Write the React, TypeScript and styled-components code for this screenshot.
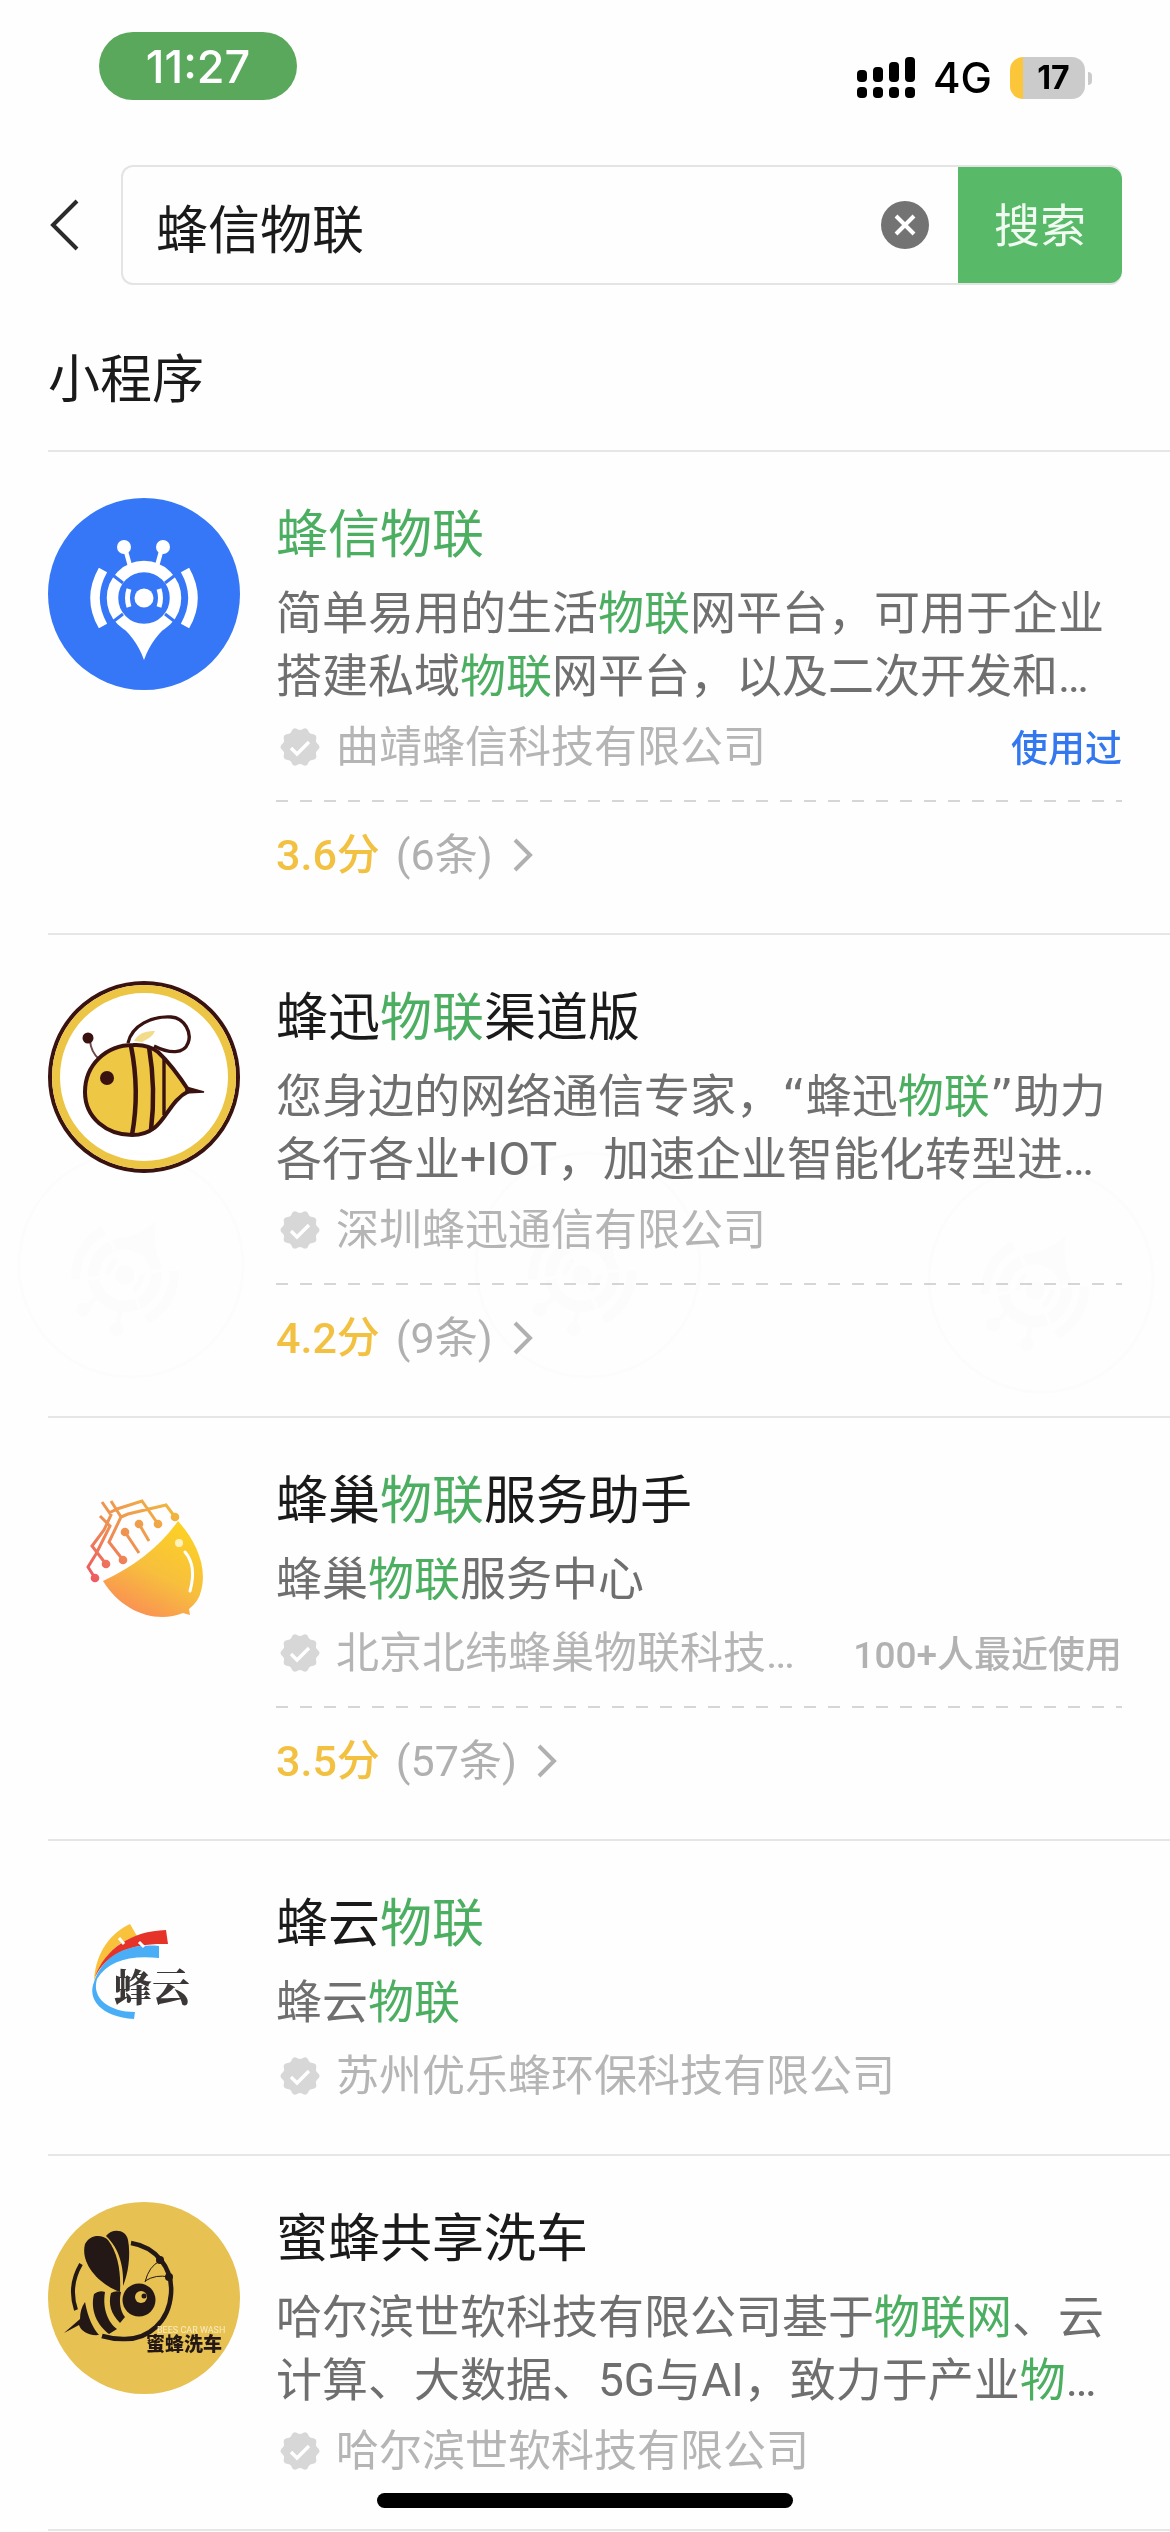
import React from "react";
import styled, { createGlobalStyle } from "styled-components";

const Global = createGlobalStyle`
  * { box-sizing: border-box; }
  body {
    margin: 0;
    background: #fefefe;
    color: #1a1a1a;
    font-family: Roboto, "Noto Sans CJK SC", sans-serif;
  }
  button, input { font: inherit; color: inherit; border: 0; margin: 0; padding: 0; background: none; }
`;

const Page = styled.div`
  position: relative;
  min-height: 100vh;
  overflow: hidden;
`;

const StatusBar = styled.header`
  display: flex;
  justify-content: space-between;
  align-items: flex-start;
  padding: 32px 78px 0 99px;
  font-family: Inter, "Noto Sans CJK SC", sans-serif;
`;

const Clock = styled.div`
  width: 198px;
  height: 68px;
  border-radius: 34px;
  background: #5aa85b;
  color: #fff;
  font-size: 45px;
  font-weight: 500;
  line-height: 70px;
  text-align: center;
`;

const StatusIcons = styled.div`
  display: flex;
  align-items: center;
  gap: 18px;
  height: 42px;
  margin-top: 25px;
`;

const Network = styled.span`
  font-size: 42px;
  line-height: 42px;
  font-weight: 500;
  color: #000;
`;

const Battery = styled.div`
  display: flex;
  align-items: center;
  gap: 3px;
`;

const BatteryBody = styled.div`
  width: 75px;
  height: 42px;
  border-radius: 13px;
  background: linear-gradient(to right, #fcc63a 13px, #cbcbcb 13px);
  padding-left: 12px;
  color: #000;
  font-size: 32px;
  font-weight: 700;
  line-height: 42px;
  text-align: center;
`;

const BatteryTip = styled.div`
  width: 4px;
  height: 13px;
  border-radius: 0 4px 4px 0;
  background: #cbcbcb;
`;

const SearchRow = styled.form`
  display: flex;
  align-items: center;
  gap: 40px;
  padding: 65px 48px 0 48px;
`;

const IconButton = styled.button`
  display: flex;
  flex: none;
  cursor: pointer;
`;

const SearchBox = styled.div`
  flex: 1;
  min-width: 0;
  display: flex;
  align-items: center;
  height: 120px;
  border: 2px solid #e4e4e4;
  border-right: 0;
  border-radius: 12px;
`;

const SearchInput = styled.input`
  flex: 1;
  min-width: 0;
  height: 100%;
  padding-left: 33px;
  padding-top: 2px;
  font-size: 52px;
  outline: none;
`;

const SearchButton = styled.button`
  align-self: stretch;
  width: 164px;
  margin-left: 29px;
  padding-top: 2px;
  border-radius: 0 12px 12px 0;
  background: #58b969;
  color: #f1fbf2;
  font-size: 46px;
  line-height: 60px;
`;

const SectionTitle = styled.h1`
  margin: 0 0 0 48px;
  padding: 59px 0 32px;
  border-bottom: 2px solid #e6e6e6;
  font-size: 52px;
  font-weight: 400;
  line-height: 74px;
`;

const Results = styled.ul`
  list-style: none;
  margin: 0 0 0 48px;
  padding: 0;
`;

const Item = styled.li`
  display: flex;
  gap: 36px;
  padding: 46px 48px 48px 0;
  border-bottom: 2px solid #e6e6e6;
`;

const Avatar = styled.svg`
  flex: none;
  width: 192px;
  height: 192px;
`;

const Body = styled.div`
  flex: 1;
  min-width: 0;
`;

const Name = styled.h2`
  margin: 0 0 8px;
  font-size: 52px;
  font-weight: 400;
  line-height: 76px;
`;

const Desc = styled.p`
  margin: 0 0 9px;
  min-height: 66px;
  color: #6f6f6f;
  font-size: 46px;
  line-height: 63px;
`;

const Hit = styled.em`
  font-style: normal;
  color: #4cae60;
`;

const Quote = styled.span`
  font-family: "DejaVu Sans", sans-serif;
`;

const Meta = styled.div`
  display: flex;
  align-items: center;
  height: 60px;
`;

const Badge = styled.svg`
  flex: none;
  width: 40px;
  height: 40px;
  margin: 0 16px 0 4px;
`;

const Company = styled.span`
  flex: 1;
  color: #b5b5b5;
  font-size: 43px;
  line-height: 60px;
  white-space: nowrap;
`;

const Usage = styled.span<{ $used?: boolean }>`
  padding-top: 6px;
  color: ${(p) => (p.$used ? "#3478f0" : "#b2b2b2")};
  font-size: 37px;
  font-weight: 500;
  line-height: 60px;
  white-space: nowrap;
`;

const Rating = styled.a`
  display: flex;
  align-items: center;
  margin-top: 23px;
  padding-top: 25px;
  background: repeating-linear-gradient(to right, #d6d6d6 0 12px, transparent 12px 24px) top / 100% 2px no-repeat;
  color: #b0b0b0;
  font-size: 43px;
  line-height: 60px;
  text-decoration: none;
`;

const Score = styled.b`
  margin-right: 16px;
  color: #f3c142;
  font-weight: 500;
`;

const Arrow = styled.svg`
  width: 20px;
  height: 34px;
  margin-left: 20px;
`;

const HomeBar = styled.div`
  position: fixed;
  left: 50%;
  bottom: 24px;
  width: 416px;
  height: 15px;
  margin-left: -208px;
  border-radius: 8px;
  background: #000;
`;

const Watermark = styled.svg<{ $left: number; $top: number }>`
  position: absolute;
  left: ${(p) => p.$left}px;
  top: ${(p) => p.$top}px;
  width: 228px;
  height: 228px;
  pointer-events: none;
  mix-blend-mode: multiply;
`;

const Signal = () => (
  <svg width="58" height="42" viewBox="0 0 58 42" aria-hidden="true">
    {[13, 10, 5, 0].map((y, i) => (
      <g key={y}>
        <rect x={i * 16} y={y} width="10" height={25 - y} rx="4" />
        <rect x={i * 16} y="30" width="10" height="11" rx="4" />
      </g>
    ))}
  </svg>
);

const badgePath = (() => {
  let d = "";
  for (let i = 0; i <= 90; i++) {
    const a = (i / 90) * Math.PI * 2;
    const r = 18.2 + 1.3 * Math.cos(a * 10 + Math.PI);
    d += `${i ? "L" : "M"}${(20 + r * Math.sin(a)).toFixed(2)} ${(20 - r * Math.cos(a)).toFixed(2)}`;
  }
  return d + "Z";
})();

const Verified = () => (
  <Badge viewBox="0 0 40 40" aria-hidden="true">
    <path d={badgePath} fill="#d7d7d7" />
    <path d="M11 21l6 6 12-12" fill="none" stroke="#fff" strokeWidth="3.4" />
  </Badge>
);

const FastBeeShape = ({ color, gap }: { color: string; gap: string }) => (
  <g fill="none" stroke={color}>
    <circle cx="76" cy="49" r="7" fill={color} stroke="none" />
    <circle cx="115" cy="49" r="7" fill={color} stroke="none" />
    <path d="M77 50L82 68M114 50L109 68" strokeWidth="4.5" />
    <circle cx="96" cy="100" r="31.5" strokeWidth="11.5" />
    <path d="M67 123Q96 137 125 123Q104 139 96 162Q88 139 67 123Z" fill={color} stroke="none" />
    <path d="M75 85L62 75M117 85L130 75M75 116L62 126M117 116L130 126" stroke={gap} strokeWidth="3" />
    <circle cx="96" cy="100" r="9.5" fill={color} stroke="none" />
    <path d="M81 91Q78 100 81 109M111 91Q114 100 111 109" strokeWidth="5" />
    <path d="M55 72Q39 100 55 128M137 72Q153 100 137 128" strokeWidth="9.5" />
  </g>
);

const FastBeeLogo = () => (
  <Avatar viewBox="0 0 192 192" aria-hidden="true">
    <circle cx="96" cy="96" r="96" fill="#3677f7" />
    <FastBeeShape color="#fff" gap="#3677f7" />
  </Avatar>
);

const RoundBeeLogo = () => (
  <Avatar viewBox="0 0 192 192" aria-hidden="true">
    <circle cx="96" cy="96" r="94" fill="#fff" stroke="#3a1210" strokeWidth="4" />
    <circle cx="96" cy="96" r="88" fill="none" stroke="#edc544" strokeWidth="8" />
    <path d="M80 62C84 44 104 35 123 36C137 37 144 52 140 62C136 73 122 73 106 65" fill="#fff" stroke="#3a1210" strokeWidth="3.4" />
    <path d="M86 60Q92 49 107 50Q105 56 94 61Z" fill="#f2dc8c" />
    <path d="M51 78Q43 71 42 60" fill="none" stroke="#6b4a48" strokeWidth="2" />
    <circle cx="40" cy="57" r="5.5" fill="#3a1210" />
    <path d="M85 64C58 64 37 84 37 111C37 137 59 154 84 154C118 154 116 122 141 110Q124 84 110 71Q100 63 85 64Z" fill="#eec745" stroke="#3a1210" strokeWidth="4" />
    <path d="M138 106L156 111L138 112Z" fill="#3a1210" stroke="#3a1210" strokeWidth="1.5" />
    <path d="M83 65Q92 110 84 154M101 66Q108 108 103 149" fill="none" stroke="#3a1210" strokeWidth="4.5" />
    <path d="M116 78V134" stroke="#3a1210" strokeWidth="3.4" />
    <circle cx="59" cy="97" r="7" fill="#3a1210" />
  </Avatar>
);

const HiveLogo = () => (
  <Avatar viewBox="0 0 192 192" aria-hidden="true">
    <defs>
      <linearGradient id="hiveFill" x1="0.85" y1="0" x2="0.3" y2="1">
        <stop offset="0" stopColor="#fdd322" />
        <stop offset="0.55" stopColor="#f7bf3d" />
        <stop offset="1" stopColor="#fa8d55" />
      </linearGradient>
      <linearGradient id="hiveWire" gradientUnits="userSpaceOnUse" x1="120" y1="42" x2="42" y2="112">
        <stop offset="0" stopColor="#f0b53f" />
        <stop offset="0.6" stopColor="#ef8a55" />
        <stop offset="1" stopColor="#ee5a62" />
      </linearGradient>
    </defs>
    <path d="M130 57C147 76 160 102 153 127Q151 137 141 145L142 151L135 149C108 160 74 148 55 117Q104 94 130 57Z" fill="url(#hiveFill)" />
    <path d="M137 88Q149 102 142 127" fill="none" stroke="#fff" strokeWidth="3" strokeLinecap="round" />
    <circle cx="131" cy="79" r="4" fill="#fff3bd" />
    <g fill="none" stroke="url(#hiveWire)" strokeWidth="3">
      <path d="M54 38L63 51L56 66L44 82L58 100M63 37L73 53L61 78L75 96M61 49L69 45L94 37L110 60M73 53L80 50L118 41L127 53M52 52L62 62L48 90L40 103L47 114M91 60L101 77M77 68L91 89" />
    </g>
    <g fill="url(#hiveWire)">
      {[[47, 114], [58, 100], [75, 96], [77, 68], [91, 60], [110, 60], [127, 53]].map(([x, y]) => (
        <circle key={x} cx={x} cy={y} r="4.3" />
      ))}
    </g>
  </Avatar>
);

const LogoText = styled.text`
  font-family: "Noto Serif CJK SC", "Noto Sans CJK SC", serif;
  font-weight: 900;
`;

const CloudLogo = () => (
  <Avatar viewBox="0 0 192 192" aria-hidden="true">
    <path d="M46 94C48 64 63 46 82 37L89 49C68 55 54 71 46 94Z" fill="#f8c23c" />
    <path d="M47 90C57 62 83 44 118 43L120 57C84 56 59 66 47 90Z" fill="#e63329" />
    <path d="M46 95C55 69 78 56 111 59L111 71C81 68 60 74 49 92C43 112 62 125 87 125L86 132C53 130 39 112 46 95Z" fill="#4aaef6" />
    <path d="M71 51L76 57M91 55L96 60" stroke="#fff" strokeWidth="3" />
    <LogoText x="66" y="114" fontSize="38" fill="#3b3736">蜂云</LogoText>
  </Avatar>
);

const CarWashLogo = () => (
  <Avatar viewBox="0 0 192 192" aria-hidden="true">
    <circle cx="96" cy="96" r="96" fill="#e7c151" />
    <g fill="none" stroke="#231815">
      <path d="M83 41C108 45 125 66 123 92C121 119 101 138 75 137Q64 137 54 134" strokeWidth="4.5" />
      <path d="M33 62Q20 84 28 108" strokeWidth="4" />
      <path d="M97 80Q101 64 112 59M97 79Q108 72 121 75" strokeWidth="1" />
    </g>
    <g fill="#231815">
      <circle cx="112" cy="58" r="4" />
      <circle cx="121" cy="75" r="4" />
      <path d="M72 90C50 82 32 61 37 42C42 32 54 32 60 38C70 51 73 70 72 90Z" />
      <path d="M75 84C76 66 72 47 58 34C64 26 78 27 80 38C83 54 80 72 75 84Z" />
      <circle cx="91" cy="98" r="16.5" />
      <path d="M63 91Q68 88 73 90C70 102 74 112 77 115L72 121C63 112 60 102 63 91Z" />
      <path d="M46 92Q51 88 57 90C54 108 61 121 69 127L61 132C49 123 42 108 46 92Z" />
      <path d="M37 100C40 116 45 126 51 133C40 134 33 129 31 123L16 131L32 117Q32 107 37 100Z" />
    </g>
    <circle cx="93" cy="95" r="6" fill="#e7c151" />
    <circle cx="96" cy="94" r="2.5" fill="#231815" />
    <text x="109" y="131" fontSize="9" fill="#f8ecc0">BEES CAR WASH</text>
    <text x="98" y="149" fontSize="19" fontWeight="900" fill="#231815">蜜蜂洗车</text>
  </Avatar>
);

type Entry = {
  Logo: React.FC;
  name: string;
  desc: string;
  company: string;
  usage?: string;
  used?: boolean;
  score?: string;
  count?: number;
};

const entries: Entry[] = [
  { Logo: FastBeeLogo, name: "[蜂信物联]", desc: "简单易用的生活[物联]网平台，可用于企业搭建私域[物联]网平台，以及二次开发和…", company: "曲靖蜂信科技有限公司", usage: "使用过", used: true, score: "3.6", count: 6 },
  { Logo: RoundBeeLogo, name: "蜂迅[物联]渠道版", desc: "您身边的网络通信专家，“蜂迅[物联]”助力各行各业+IOT，加速企业智能化转型进…", company: "深圳蜂迅通信有限公司", score: "4.2", count: 9 },
  { Logo: HiveLogo, name: "蜂巢[物联]服务助手", desc: "蜂巢[物联]服务中心", company: "北京北纬蜂巢物联科技…", usage: "100+人最近使用", score: "3.5", count: 57 },
  { Logo: CloudLogo, name: "蜂云[物联]", desc: "蜂云[物联]", company: "苏州优乐蜂环保科技有限公司" },
  { Logo: CarWashLogo, name: "蜜蜂共享洗车", desc: "哈尔滨世软科技有限公司基于[物联网]、云计算、大数据、5G与AI，致力于产业[物]…", company: "哈尔滨世软科技有限公司" },
];

const watermarks = [
  { left: 17, top: 1151 },
  { left: 474, top: 1151 },
  { left: 927, top: 1166 },
];

// Parts in square brackets are the matched keywords; curly quotes get a wider face.
const highlight = (text: string) =>
  text.split(/(\[[^\]]*\]|[“”])/).map((part, i) => {
    if (part.startsWith("[")) return <Hit key={i}>{part.slice(1, -1)}</Hit>;
    if (part === "“" || part === "”") return <Quote key={i}>{part}</Quote>;
    return part;
  });

export default function App() {
  return (
    <Page>
      <Global />
      <StatusBar>
        <Clock>11:27</Clock>
        <StatusIcons>
          <Signal />
          <Network>4G</Network>
          <Battery>
            <BatteryBody>17</BatteryBody>
            <BatteryTip />
          </Battery>
        </StatusIcons>
      </StatusBar>
      <SearchRow onSubmit={(e) => e.preventDefault()}>
        <IconButton type="button" aria-label="返回">
          <svg width="33" height="54" viewBox="0 0 33 54" fill="none" stroke="#2b2b2b" strokeWidth="4">
            <path d="M29 3L5 27L29 51" />
          </svg>
        </IconButton>
        <SearchBox>
          <SearchInput aria-label="搜索小程序" defaultValue="蜂信物联" />
          <IconButton type="button" aria-label="清除">
            <svg width="48" height="48" viewBox="0 0 48 48">
              <circle cx="24" cy="24" r="24" fill="#737373" />
              <path d="M15 15L33 33M33 15L15 33" stroke="#fff" strokeWidth="4" />
            </svg>
          </IconButton>
          <SearchButton type="submit">搜索</SearchButton>
        </SearchBox>
      </SearchRow>
      <SectionTitle>小程序</SectionTitle>
      <Results>
        {entries.map(({ Logo, ...e }) => (
          <Item key={e.name}>
            <Logo />
            <Body>
              <Name>{highlight(e.name)}</Name>
              <Desc>{highlight(e.desc)}</Desc>
              <Meta>
                <Verified />
                <Company>{e.company}</Company>
                {e.usage && <Usage $used={e.used}>{e.usage}</Usage>}
              </Meta>
              {e.score && (
                <Rating href="#">
                  <Score>{e.score}分</Score>({e.count}条)
                  <Arrow viewBox="0 0 20 34" fill="none" stroke="#b0b0b0" strokeWidth="4" aria-hidden="true">
                    <path d="M2 2L17 17L2 32" />
                  </Arrow>
                </Rating>
              )}
            </Body>
          </Item>
        ))}
      </Results>
      {watermarks.map(({ left, top }) => (
        <Watermark key={left} $left={left} $top={top} viewBox="0 0 228 228" aria-hidden="true">
          <circle cx="114" cy="114" r="112" fill="none" stroke="#fdfdfd" strokeWidth="3" />
          <g transform="translate(108 124) rotate(210) translate(-96 -100)">
            <FastBeeShape color="#fdfdfd" gap="#fff" />
          </g>
        </Watermark>
      ))}
      <HomeBar />
    </Page>
  );
}
